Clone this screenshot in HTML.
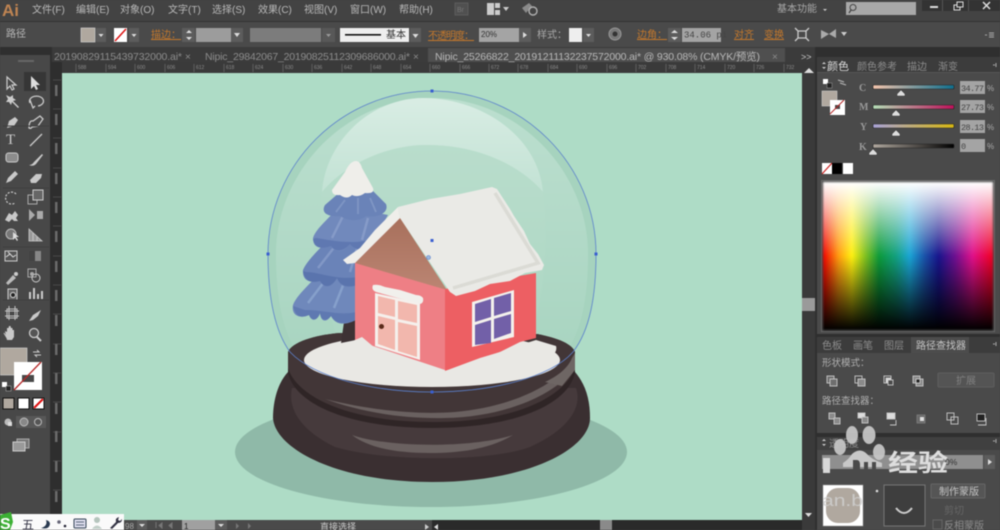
<!DOCTYPE html>
<html><head><meta charset="utf-8"><style>
html,body{margin:0;padding:0;background:#444;width:1000px;height:530px;overflow:hidden}
svg{display:block;filter:blur(.45px)}
text{font-family:"Liberation Sans","Noto Sans CJK SC",sans-serif;fill:#b8b8b8;font-size:10px}
.o{fill:#c4782c;text-decoration:underline}
.d{fill:#8c8c8c}
.s{font-size:5px;fill:#8a8a8a}
.t{fill:none;stroke:#c9c9c9;stroke-width:1.3}
.f{fill:#c9c9c9}
.p{fill:none;stroke:#c4c4c4;stroke-width:1}
</style></head><body>
<div style="position:relative;width:1000px;height:530px;overflow:hidden">
<svg width="1000" height="530" viewBox="0 0 1000 530" xmlns="http://www.w3.org/2000/svg" style="position:absolute;left:0;top:0;z-index:1">
<defs>
<linearGradient id="gable" x1="0" y1="0" x2="0" y2="1"><stop offset="0" stop-color="#a8705c"/><stop offset="1" stop-color="#bb8573"/></linearGradient>
<linearGradient id="glass" x1="0" y1="0" x2="0" y2="1"><stop offset="0" stop-color="#bcdfcf"/><stop offset="1" stop-color="#a9d5c1"/></linearGradient>
<linearGradient id="top" x1="0" y1="0" x2="0" y2="1"><stop offset="0" stop-color="#d9ede4"/><stop offset="1" stop-color="#c2e2d4"/></linearGradient>
<linearGradient id="inner" x1="0" y1="0" x2="0" y2="1"><stop offset="0" stop-color="#b9ddcc"/><stop offset="1" stop-color="#acd7c3"/></linearGradient>
<linearGradient id="sc"><stop offset="0" stop-color="#f5c5ad"/><stop offset="1" stop-color="#0e6f8e"/></linearGradient>
<linearGradient id="sm"><stop offset="0" stop-color="#b5e0b8"/><stop offset="1" stop-color="#c0105a"/></linearGradient>
<linearGradient id="sy"><stop offset="0" stop-color="#a9a3d8"/><stop offset="1" stop-color="#d8b810"/></linearGradient>
<linearGradient id="sk"><stop offset="0" stop-color="#b0a89f"/><stop offset="1" stop-color="#000"/></linearGradient>
</defs>
<!-- chrome backgrounds -->
<rect x="0" y="0" width="1000" height="530" fill="#474747"/>
<rect x="0" y="0" width="1000" height="21" fill="#434343"/>
<rect x="0" y="21" width="1000" height="1" fill="#333"/>
<rect x="0" y="22" width="1000" height="25" fill="#4a4a4a"/>
<rect x="0" y="47" width="815" height="15" fill="#3b3b3b"/>
<rect x="0" y="47" width="52" height="483" fill="#2f2f2f"/>
<rect x="0" y="55" width="50" height="475" fill="#484848"/>
<rect x="428" y="48" width="357" height="14" fill="#4f4f4f"/>
<rect x="52" y="62" width="750" height="11" fill="#3a3a3a"/>
<rect x="51" y="62" width="11" height="468" fill="#2e2e2e"/>
<rect x="62" y="73" width="740" height="447" fill="#aedcc6"/>
<rect x="802" y="62" width="13" height="468" fill="#3a3a3a"/>
<rect x="815" y="47" width="185" height="483" fill="#2f2f2f"/>
<rect x="817" y="57" width="183" height="15" fill="#3c3c3c"/>
<rect x="817" y="72" width="183" height="262" fill="#4a4a4a"/>
<rect x="817" y="337" width="183" height="16" fill="#3c3c3c"/>
<rect x="817" y="353" width="183" height="80" fill="#4a4a4a"/>
<rect x="817" y="437" width="183" height="13" fill="#404040"/>
<rect x="817" y="450" width="183" height="80" fill="#4a4a4a"/>
<rect x="62" y="520" width="740" height="10" fill="#4a4a4a"/>
<rect x="432" y="520" width="370" height="10" fill="#2a2a2a"/>
<rect x="600" y="520" width="12" height="10" fill="#8a8a8a"/>
<rect x="802" y="298" width="13" height="13" fill="#9a9a9a"/>
<rect x="922" y="0" width="78" height="11" fill="#333"/>
<rect x="942" y="0" width="1" height="11" fill="#555"/><rect x="968" y="0" width="1" height="11" fill="#555"/>

<!-- menu -->
<text x="2" y="16" style="font-size:17px;font-weight:bold;fill:#bf8452">Ai</text>
<text x="32" y="13">文件(F)</text><text x="76" y="13">编辑(E)</text><text x="120" y="13">对象(O)</text><text x="168" y="13">文字(T)</text><text x="212" y="13">选择(S)</text><text x="258" y="13">效果(C)</text><text x="304" y="13">视图(V)</text><text x="350" y="13">窗口(W)</text><text x="399" y="13">帮助(H)</text>
<rect x="455" y="3" width="13" height="12" fill="#505050" stroke="#5c5c5c"/>
<text x="457" y="12" style="font-size:7px;fill:#777">Br</text>
<rect x="487" y="3" width="7" height="12" fill="#ccc"/><rect x="495" y="3" width="5" height="5" fill="#ccc"/><rect x="495" y="10" width="5" height="5" fill="#ccc"/>
<path d="M503 7h6l-3 4z" fill="#ccc"/>
<path d="M522 8l7-5 3 3-6 7z" fill="#8a8a8a"/><circle cx="533" cy="11" r="4" fill="none" stroke="#b0b0b0" stroke-width="1.4"/>
<text x="777" y="12" style="fill:#a8a8a8">基本功能</text>
<path d="M823 9h4l-2 2z" fill="#ccc"/>
<rect x="846" y="2" width="70" height="13" fill="#a8a8a8"/>
<circle cx="853" cy="7.5" r="3" fill="none" stroke="#444"/><path d="M851 10l-2 3" stroke="#444" stroke-width="1.3"/>
<rect x="930" y="6" width="8" height="2" fill="#ddd"/>
<rect x="954" y="5" width="6" height="5" fill="none" stroke="#ddd"/><rect x="957" y="2" width="6" height="5" fill="#333" stroke="#ddd"/>
<path d="M983 2l7 7M990 2l-7 7" stroke="#ddd" stroke-width="1.5"/>

<!-- control bar -->
<text x="6" y="37">路径</text>
<rect x="81" y="28" width="14" height="14" fill="#b0a89f" stroke="#ddd" stroke-width=".6"/>
<rect x="96" y="28" width="10" height="14" fill="#5c5c5c"/><path d="M98.500 34h5l-2.500 3z" fill="#ddd"/>
<rect x="114" y="28" width="13" height="14" fill="#fff"/><path d="M115 41L126 29" stroke="#d11" stroke-width="1.500"/>
<rect x="129" y="28" width="10" height="14" fill="#5c5c5c"/><path d="M131.500 34h5l-2.500 3z" fill="#ddd"/>
<text x="151" y="38" class="o">描边：</text>
<rect x="182" y="28" width="13" height="14" fill="#5c5c5c"/><path d="M186 33l3-3 3 3zM186 37l3 3 3-3z" fill="#ddd"/>
<rect x="196" y="28" width="35" height="14" fill="#9c9c9c"/>
<rect x="231" y="28" width="12" height="14" fill="#5c5c5c"/><path d="M234 33h6l-3 4z" fill="#ddd"/>
<rect x="250" y="28" width="71" height="14" fill="#7c7c7c"/>
<rect x="322" y="28" width="13" height="14" fill="#585858"/><path d="M326 34h5l-2.500 3z" fill="#999"/>
<rect x="340" y="28" width="69" height="14" fill="#eee"/>
<rect x="345" y="34" width="36" height="1.600" fill="#111"/>
<text x="386" y="38" style="fill:#333">基本</text>
<rect x="410" y="28" width="11" height="14" fill="#5c5c5c"/><path d="M412.500 34h6l-3 4z" fill="#ddd"/>
<text x="428" y="39" class="o" textLength="46">不透明度：</text>
<rect x="479" y="28" width="40" height="14" fill="#a4a4a4"/>
<text x="481" y="37" style="font-size:8px;fill:#333">20%</text>
<rect x="519" y="28" width="12" height="14" fill="#5c5c5c"/><path d="M523 32l4 3-4 3z" fill="#ddd"/>
<text x="537" y="38" style="fill:#a8a8a8">样式：</text>
<rect x="569" y="28" width="13" height="14" fill="#eee"/>
<rect x="583" y="28" width="11" height="14" fill="#5c5c5c"/><path d="M586 34h5l-2.500 3z" fill="#ddd"/>
<circle cx="615" cy="34" r="6" fill="#777" stroke="#999"/><circle cx="615" cy="34" r="2.500" fill="#333"/>
<text x="637" y="38" class="o">边角：</text>
<rect x="668" y="28" width="13" height="14" fill="#5c5c5c"/><path d="M671 33l3.500-3 3.500 3zM671 37l3.500 3 3.500-3z" fill="#ddd"/>
<rect x="682" y="28" width="39" height="14" fill="#a4a4a4"/>
<text x="684" y="37.500" style="font-family:'Liberation Mono';font-size:9px;fill:#444">34.06 pi</text>
<text x="734" y="38" class="o">对齐</text><text x="764" y="38" class="o">变换</text>
<path d="M798 31h8v7h-8zM795 28l3 3M809 28l-3 3M795 41l3-3M809 41l-3-3" fill="none" stroke="#ccc" stroke-width="1.300"/>
<path d="M821 30l8 4-8 5zM836 29l-7 5 7 4z" fill="#aaa"/><path d="M841 32h6l-3 4z" fill="#ccc"/>
<path d="M985 35h2M989 33h5M989 35h5M989 37h5" stroke="#aaa"/>

<!-- tabs -->
<text x="54" y="60" class="d" style="font-size:10.500px" textLength="128">20190829115439732000.ai*</text>
<text x="185" y="60" class="d" style="font-size:10px">×</text>
<text x="205" y="60" class="d" style="font-size:10.500px" textLength="205">Nipic_29842067_20190825112309686000.ai*</text>
<text x="413" y="60" class="d" style="font-size:10px">×</text>
<text x="435" y="60" style="font-size:10.500px;fill:#b8b8b8" textLength="325">Nipic_25266822_20191211132237572000.ai* @ 930.08% (CMYK/预览)</text>
<text x="772" y="60" class="d">×</text>
<text x="801" y="60" style="fill:#ccc;font-size:9px">&gt;&gt;</text>
<path d="M804 73l5-5 5 5z" fill="#ddd"/>
<path d="M805 513h7l-3.500 4z" fill="#ddd"/>

<!-- h ruler -->
<g>
<text class="s" x="78" y="69">588</text><text class="s" x="108" y="69">594</text><text class="s" x="137" y="69">600</text><text class="s" x="167" y="69">606</text><text class="s" x="196" y="69">612</text><text class="s" x="226" y="69">618</text><text class="s" x="255" y="69">624</text><text class="s" x="285" y="69">630</text><text class="s" x="314" y="69">636</text><text class="s" x="344" y="69">642</text><text class="s" x="373" y="69">648</text><text class="s" x="403" y="69">654</text><text class="s" x="432" y="69">660</text><text class="s" x="462" y="69">666</text><text class="s" x="491" y="69">672</text><text class="s" x="520" y="69">678</text><text class="s" x="550" y="69">684</text><text class="s" x="579" y="69">690</text><text class="s" x="609" y="69">696</text><text class="s" x="638" y="69">702</text><text class="s" x="668" y="69">708</text><text class="s" x="697" y="69">714</text><text class="s" x="727" y="69">720</text><text class="s" x="756" y="69">726</text><text class="s" x="786" y="69">732</text>
</g>
<path stroke="#777" stroke-width=".6" d="M76 64v8M106 64v8M135 64v8M165 64v8M194 64v8M224 64v8M253 64v8M283 64v8M312 64v8M342 64v8M371 64v8M401 64v8M430 64v8M460 64v8M489 64v8M518 64v8M548 64v8M577 64v8M607 64v8M636 64v8M666 64v8M695 64v8M725 64v8M754 64v8M784 64v8"/>
<path stroke="#666" stroke-width=".6" d="M53 80h8M53 109h8M53 138h8M53 168h8M53 197h8M53 226h8M53 256h8M53 285h8M53 314h8M53 344h8M53 373h8M53 402h8M53 432h8M53 461h8M53 490h8M53 519h8"/>
<g fill="#6a6a6a"><rect x="55" y="85" width="2.500" height="11"/><rect x="55" y="114" width="2.500" height="11"/><rect x="55" y="143" width="2.500" height="11"/><rect x="55" y="173" width="2.500" height="11"/><rect x="55" y="202" width="2.500" height="11"/><rect x="55" y="231" width="2.500" height="11"/><rect x="55" y="261" width="2.500" height="11"/><rect x="55" y="290" width="2.500" height="11"/><rect x="55" y="315" width="2.500" height="11"/><rect x="55" y="344" width="2.500" height="11"/><rect x="55" y="373" width="2.500" height="11"/><rect x="55" y="403" width="2.500" height="11"/><rect x="55" y="431" width="2.500" height="11"/><rect x="55" y="461" width="2.500" height="11"/><rect x="55" y="491" width="2.500" height="11"/></g>

<!-- tools -->
<rect x="24" y="72" width="22" height="19" fill="#363636"/>
<rect x="18" y="60" width="16" height="2" fill="#666"/>
<path d="M7 77l0 12 3-3 2 4 2-1-2-4 4 0z" fill="none" stroke="#ccc" stroke-width="1.200"/>
<path d="M31 76l0 13 3-3 2 4 2-1-2-4 4 0z" fill="#ddd"/>
<path d="M6 95l4 2 3-2 0 3 3 2-3 1 6 6-1 1-6-6-1 3-2-3-3 0 2-3z" fill="#ccc"/>
<path d="M30 103a7 5 0 1 1 8 3M30 100l3 8 2-2" class="t"/>
<path d="M7 128l2-7 6-4 3 3-4 6z" class="f"/>
<path d="M29 128q0-8 4-7l7-5 3 3-5 7-6 1q-1 2-3 1z" class="t"/>
<text x="6" y="144" style="font-family:'Liberation Serif';font-size:15px;fill:#ccc">T</text>
<path d="M30 146l12-12" class="t"/>
<rect x="6" y="153" width="12" height="9" rx="2.500" fill="#8c8c8c" stroke="#ccc"/>
<path d="M29 165q3 0 5-3l8-8 1 1-7 9q-3 3-7 1z" class="f"/>
<path d="M6 183l2-5 7-7 3 3-7 7z" class="f"/>
<path d="M30 180l6-6h6l-1 4-5 5h-5z" class="f"/>
<path d="M16 194a6 6 0 1 0-1 9" fill="none" stroke="#ccc" stroke-width="1.200" stroke-dasharray="2 1.500"/>
<rect x="28" y="195" width="9" height="9" fill="none" stroke="#aaa"/><rect x="33" y="190" width="10" height="10" fill="#666" stroke="#ccc"/>
<path d="M5 220l4-7 3 2 3-4 3 4-2 3 2 3h-4l-2-2-3 3z" class="f"/>
<path d="M29 209l6 6-6 6zM37 211h6v8h-6z" fill="#aaa"/>
<circle cx="11" cy="234" r="5" fill="#777" stroke="#bbb"/><path d="M13 232l0 8 2-2 2 3 1-1-2-3 3 0z" fill="#ddd"/>
<path d="M29 229v12h13l-13-12zM33 233v8M37 237v4" fill="#999" stroke="#ccc" stroke-width=".8"/>
<rect x="5" y="251" width="12" height="10" fill="#555" stroke="#ccc"/><path d="M6 257l4-3 3 3 3-2M8 252l3 3" stroke="#ddd" fill="none"/>
<rect x="29" y="251" width="12" height="10" fill="#888"/><rect x="29" y="251" width="6" height="10" fill="#444"/>
<path d="M6 283l7-8 3 3-8 7z" fill="#bbb"/><circle cx="16" cy="274" r="2" fill="#ccc"/>
<rect x="28" y="269" width="8" height="8" fill="none" stroke="#aaa"/><circle cx="36" cy="278" r="4" fill="none" stroke="#ccc"/><circle cx="32" cy="274" r="2" fill="#aaa"/>
<rect x="8" y="289" width="9" height="11" fill="#666" stroke="#ccc"/><circle cx="13" cy="295" r="2.500" fill="#222" stroke="#ddd"/>
<path d="M30 299v-7M34 299v-11M38 299v-5M42 299v-8" stroke="#ccc" stroke-width="2"/>
<path d="M7 309h10v9H7zM5 311h14M5 316h14M9 306v14M15 306v14" class="p"/>
<path d="M29 321l4-6 8-5-3 6-5 4z" class="f"/>
<path d="M6 336l-1-5 2 1v-4h1.500l.5-2h1.500l.5 2h1.500v2h1.500v7l-2 3h-5z" class="f"/><path d="M4 333l3 5" stroke="#ccc"/>
<circle cx="34" cy="333" r="4.500" fill="#555" stroke="#ccc" stroke-width="1.300"/><path d="M37 337l4 4" stroke="#ccc" stroke-width="2"/>
<path d="M3 300h46M3 188h46M3 126h46M3 247h46" stroke="#3e3e3e"/>
<!-- fill / stroke -->
<rect x="0" y="348" width="27" height="27" fill="#b0a89f" stroke="#ddd" stroke-width=".6"/>
<rect x="14" y="362" width="28" height="28" fill="#fff"/><rect x="22" y="375" width="12" height="7" fill="#484848"/>
<path d="M14 390l27-28" stroke="#b52828" stroke-width="1.300"/>
<path d="M33 352l6 0-2-2M41 355l-6 0 2 2" fill="none" stroke="#ccc"/>
<rect x="2" y="382" width="5" height="5" fill="#fff"/><rect x="6" y="386" width="5" height="5" fill="#222" stroke="#bbb" stroke-width=".5"/>
<rect x="3" y="398" width="11" height="11" fill="#b0a89f" stroke="#111"/>
<rect x="18" y="398" width="11" height="11" fill="#fff" stroke="#111"/>
<rect x="33" y="398" width="11" height="11" fill="#fff" stroke="#111"/><path d="M34 408l9-9" stroke="#d11" stroke-width="2"/>
<rect x="16" y="416" width="30" height="12" fill="#585858"/>
<circle cx="8" cy="422" r="3.500" fill="#bbb"/><rect x="8" y="422" width="4" height="4" fill="#ddd"/>
<circle cx="24" cy="422" r="4" fill="#888" stroke="#bbb"/><circle cx="38" cy="422" r="3.500" fill="#555" stroke="#bbb"/>
<rect x="17" y="439" width="12" height="9" fill="#777" stroke="#aaa"/><rect x="13" y="442" width="12" height="9" fill="#999" stroke="#ccc"/>

<!-- artwork -->
<ellipse cx="431" cy="452" rx="196" ry="55" fill="#8fb9a8"/>
<path d="M268 254C268 165 341 91 432 91C523 91 596 165 596 254C596 296 590 330 573 352L290 352C274 330 268 296 268 254Z" fill="#a6d3be"/>
<path d="M276 254C276 172 345 98 432 98C519 98 588 172 588 254C588 296 582 330 566 352L297 352C282 330 276 296 276 254Z" fill="url(#glass)"/>
<path d="M322 192C326 140 372 98 423 98C480 98 538 135 543 192C515 160 470 145 427 145C385 145 345 165 322 192Z" fill="url(#top)"/>
<path d="M322 192C345 165 385 145 427 145C470 145 515 160 543 192C548 250 545 300 525 350L340 350C325 300 318 240 322 192Z" fill="url(#inner)"/>
<!-- base -->
<path d="M288 372C276 385 273 405 273 418C275 448 335 482 432 482C530 482 590 448 590 418C590 400 586 385 575 372Z" fill="#3a2f31"/>
<path d="M292 388C288 405 296 428 335 447C385 462 490 462 530 447C572 428 582 405 576 388Z" fill="#463a3c"/>
<path d="M288 352C292 342 315 335 340 333L537 334C558 338 572 344 575 352L575 372C570 402 520 428 432 428C345 428 293 402 288 372Z" fill="#2f2526"/>
<path d="M288 352C292 342 315 335 340 333L537 334C558 338 572 344 575 352L575 368C565 395 520 422 432 422C345 422 296 395 288 368Z" fill="#423637"/>
<path d="M325 399C370 410 415 415 455 412C500 408 548 392 572 362L575 368C555 395 505 417 445 418C400 419 358 411 325 399Z" fill="#6a6160"/>
<path d="M545 382C558 376 568 368 572 358L575 353V370L562 386Z" fill="#6e6664"/>
<path d="M352 435C385 447 470 449 513 435C490 449 460 453 430 453C400 453 370 449 352 435Z" fill="#6a6160"/>
<ellipse cx="432" cy="360" rx="128" ry="27" fill="#e9e8e4"/>
<!-- tree -->
<path d="M341 343L345 315H356V340Z" fill="#3d3234"/>
<path d="M332 258C318 278 298 292 293 305C291 316 300 319 309 315C312 323 318 320 320 313C321 323 327 322 331 316C336 326 346 325 356 320L375 245Z" fill="#6f88bb"/>
<path d="M293 306C296 318 302 318 309 315C312 322 318 320 320 313C321 322 327 321 331 316C336 325 346 324 356 320L356 312C340 316 325 310 305 310Z" fill="#5f79b1"/>
<path d="M324 282L308 303M346 278L334 308" stroke="#86a0cb" stroke-width="2.500" fill="none"/>
<path d="M336 230C325 245 308 258 303 270C302 282 312 283 320 281C325 290 332 287 337 278C341 289 350 288 358 285L385 235Z" fill="#6a83b8"/>
<path d="M303 271C305 282 312 283 320 281C325 289 332 287 337 278C341 288 350 287 358 285L362 276C340 282 320 272 306 272Z" fill="#5a74ad"/>
<path d="M340 240L318 268M360 238L350 272" stroke="#8298c6" stroke-width="2.500" fill="none"/>
<path d="M340 205C330 218 316 228 313 238C313 249 322 249 331 246C336 254 344 252 350 244C355 252 364 250 370 246L388 215Z" fill="#7189bc"/>
<path d="M313 239C315 249 322 249 331 246C336 253 344 251 350 244C355 251 364 250 370 246L376 238C355 246 330 240 316 238Z" fill="#5f78b1"/>
<path d="M345 212L332 238M368 218L362 240" stroke="#869bc8" stroke-width="2.500" fill="none"/>
<path d="M340 192L325 205C321 212 326 217 340 216C350 222 360 221 366 216C380 218 389 212 386 204L370 188Z" fill="#6a83b8"/>
<path d="M345 200L336 212M358 198V214M370 198L376 212" stroke="#7f96c4" stroke-width="1.800" fill="none"/>
<path d="M356 161Q350 161 345 172L332 190Q332 196 340 195Q347 200 352 195Q358 198 365 193Q375 194 373 188L362 168Q360 161 356 161Z" fill="#efeeea"/>
<!-- house -->
<path d="M355 263L400 218L445 289L445 370L355 340Z" fill="#ee7f85"/>
<path d="M355 263L400 218L447 290Z" fill="url(#gable)"/>
<path d="M445 289L536 273V338L520 342L500 352L480 358L445 371Z" fill="#ed5f63"/>
<path d="M355 340L362 337L375 348L420 362L445 371L470 364L500 352L520 345L536 340L556 346C565 375 400 395 306 365C300 350 330 345 340 346Z" fill="#e9e8e4"/>
<!-- door -->
<path d="M375 293L420 303V360L375 346Z" fill="#f5f0ec"/>
<path d="M378 296L395 300V317L378 313ZM398 301L417 305V323L398 319ZM378 316L395 320V350L378 344ZM398 322L417 326V357L398 351Z" fill="#f2b7ad"/>
<circle cx="381.500" cy="326.500" r="2.500" fill="#5a2a1a"/>
<path d="M373 285Q371 290 376 292L420 304Q424 303 423 298Q421 295 416 295L400 290L385 287Q378 284 373 285Z" fill="#f1f0ec"/>
<!-- window -->
<path d="M472 302L514 290V337L472 347Z" fill="#f4f1ec"/>
<path d="M475 304L491 299V317L475 322ZM494 298L511 293V311L494 316ZM475 325L491 320V343L475 345ZM494 319L511 314V333L494 339Z" fill="#7260a8"/>
<!-- roof -->
<path d="M398 207L430 199L460 194L492 187L497 189L510 209L514 216L524 231L530 244L538 254L544 265L542 270L525 273L510 281L490 284L475 291L456 296L450 292L400 218Z" fill="#eaeae6"/>
<path d="M495 193L538 263L453 288" fill="none" stroke="#dbdbd5" stroke-width="3.500"/>
<path d="M398 207L400 218L355 263L347 264L343 260L360 248L375 230Z" fill="#efeeea"/>
<!-- outline -->
<path d="M432 91C523 91 596 165 596 254C596 296 590 330 573 352C550 378 490 392 432 392C374 392 315 378 290 352C274 330 268 296 268 254C268 165 341 91 432 91Z" fill="none" stroke="#5b80cc" stroke-width=".8"/>
<g fill="#3a5fd0"><rect x="430.500" y="89.500" width="3" height="3"/><rect x="266.500" y="252.500" width="3" height="3"/><rect x="594.500" y="252.500" width="3" height="3"/><rect x="430.500" y="390.500" width="3" height="3"/><rect x="430.500" y="239" width="3" height="3"/></g>
<circle cx="428.500" cy="257.500" r="2" fill="#9bb7dd" stroke="#5b80cc" stroke-width=".6"/>

<!-- status bar -->
<text x="125" y="529" style="font-size:8px;fill:#aaa">98</text>
<rect x="137" y="520" width="10" height="10" fill="#5c5c5c"/><path d="M139 524h6l-3 3z" fill="#ddd"/>
<path d="M156 522v6M162 523l-3 2.500 3 2.500zM172 523l-3 2.500 3 2.500z" stroke="#777" fill="#777"/>
<rect x="182" y="520" width="33" height="10" fill="#a0a0a0"/><text x="184" y="529" style="font-size:8px;fill:#222">1</text>
<rect x="215" y="520" width="12" height="10" fill="#5c5c5c"/><path d="M218 524h6l-3 3z" fill="#ddd"/>
<path d="M236 523l3 3-3 3zM248 523l3 3-3 3" fill="#777"/>
<text x="320" y="530" style="font-size:9px;fill:#ccc">直接选择</text>
<path d="M425 524l4 3-4 3z" fill="#ccc"/>
<path d="M438 524l-4 3 4 3z" fill="#ddd"/>

<!-- color panel -->
<path d="M822 64l2-2 2 2zM822 67l2 2 2-2z" fill="#ccc"/>
<text x="827" y="70" style="font-size:11px;fill:#ddd">颜色</text>
<text x="857" y="70" class="d">颜色参考</text><text x="907" y="70" class="d">描边</text><text x="938" y="70" class="d">渐变</text>
<path d="M993 65h2M996 63v4" stroke="#aaa"/>
<rect x="817" y="72" width="183" height="1" fill="#555"/>
<rect x="822" y="91" width="15" height="15" fill="#b0a89f" stroke="#ddd" stroke-width=".5"/>
<rect x="830" y="100" width="15" height="15" fill="#fff"/><rect x="835" y="105" width="5" height="4" fill="#484848"/><path d="M830 114l14-14" stroke="#b52828"/>
<rect x="823" y="79" width="5" height="5" fill="#fff"/><rect x="827" y="83" width="5" height="5" fill="#222" stroke="#bbb" stroke-width=".4"/>
<path d="M838 80l6 2M846 85l-6-2" stroke="#bbb" stroke-width="1"/>
<text x="859" y="91" style="font-family:'Liberation Serif';font-weight:bold;fill:#999">C</text>
<text x="859" y="110" style="font-family:'Liberation Serif';font-weight:bold;fill:#999">M</text>
<text x="860" y="130" style="font-family:'Liberation Serif';font-weight:bold;fill:#999">Y</text>
<text x="859" y="150" style="font-family:'Liberation Serif';font-weight:bold;fill:#999">K</text>
<rect x="873" y="85" width="81" height="4" rx="1" fill="url(#sc)" stroke="#222" stroke-width=".6"/>
<rect x="873" y="105" width="81" height="4" rx="1" fill="url(#sm)" stroke="#222" stroke-width=".6"/>
<rect x="873" y="124" width="81" height="4" rx="1" fill="url(#sy)" stroke="#222" stroke-width=".6"/>
<rect x="873" y="144" width="81" height="4" rx="1" fill="url(#sk)" stroke="#222" stroke-width=".6"/>
<g fill="#ddd" stroke="#222" stroke-width=".4"><path d="M901 90l4 4v2h-8v-2z"/><path d="M896 110l4 4v2h-8v-2z"/><path d="M896 130l4 4v2h-8v-2z"/><path d="M873 149l4 4v2h-8v-2z"/></g>
<rect x="960" y="81" width="25" height="13" fill="#a4a4a4"/><rect x="960" y="100" width="25" height="13" fill="#a4a4a4"/><rect x="960" y="120" width="25" height="13" fill="#a4a4a4"/><rect x="960" y="139" width="25" height="13" fill="#a4a4a4"/>
<text x="961" y="91" style="font-family:'Liberation Mono';font-size:8.500px;fill:#444" textLength="23">34.77</text>
<text x="961" y="110" style="font-family:'Liberation Mono';font-size:8.500px;fill:#444" textLength="23">27.73</text>
<text x="961" y="130" style="font-family:'Liberation Mono';font-size:8.500px;fill:#444" textLength="23">28.13</text>
<text x="961" y="149" style="font-family:'Liberation Mono';font-size:8.500px;fill:#444">0</text>
<text x="987" y="91" style="font-size:8px;fill:#aaa">%</text><text x="987" y="110" style="font-size:8px;fill:#aaa">%</text><text x="987" y="130" style="font-size:8px;fill:#aaa">%</text><text x="987" y="149" style="font-size:8px;fill:#aaa">%</text>
<rect x="822" y="163" width="10" height="11" fill="#fff"/><path d="M822 174l10-11" stroke="#c22" stroke-width="1.200"/>
<rect x="832" y="163" width="10" height="11" fill="#000"/>
<rect x="843" y="163" width="10" height="11" fill="#fff"/>
<rect x="821.500" y="180.500" width="173" height="151" fill="none" stroke="#666"/>

<!-- pathfinder panel -->
<rect x="911" y="337" width="58" height="16" fill="#4c4c4c"/>
<text x="822" y="349" class="d">色板</text><text x="853" y="349" class="d">画笔</text><text x="884" y="349" class="d">图层</text><text x="916" y="349" style="fill:#c4c4c4">路径查找器</text>
<path d="M993 344h2M996 342v4" stroke="#aaa"/>
<text x="822" y="366" style="fill:#b0b0b0;font-size:9.500px">形状模式：</text>
<g fill="#6e6e6e" stroke="#c8c8c8" stroke-width=".9">
<rect x="827" y="376" width="7" height="7"/><rect x="830" y="379" width="7" height="7"/>
<rect x="855" y="376" width="7" height="7" fill="#4a4a4a"/><rect x="858" y="379" width="7" height="7" fill="#8a8a8a"/>
<rect x="884" y="376" width="7" height="7" fill="#4a4a4a"/><rect x="886" y="378" width="5" height="5" fill="#ddd"/><rect x="888" y="380" width="5" height="5" fill="#4a4a4a"/>
<rect x="913" y="376" width="7" height="7" fill="#8a8a8a"/><rect x="916" y="379" width="7" height="7" fill="#8a8a8a"/><rect x="916" y="379" width="4" height="4" fill="#222"/>
</g>
<rect x="938" y="373" width="56" height="14" rx="1" fill="#545454" stroke="#5e5e5e"/>
<text x="956" y="384" style="fill:#808080">扩展</text>
<text x="822" y="404" style="fill:#b0b0b0;font-size:9.500px">路径查找器：</text>
<g fill="#8a8a8a" stroke="#c8c8c8" stroke-width=".9">
<rect x="829" y="413" width="6" height="6"/><rect x="834" y="418" width="6" height="6"/>
<rect x="858" y="413" width="7" height="5" fill="#ddd"/><rect x="862" y="417" width="6" height="6"/>
<rect x="887" y="413" width="8" height="6" fill="#ddd"/><path d="M896 420v5h-6" fill="none"/>
<rect x="917" y="415" width="8" height="8" fill="#6a6a6a" stroke="#7a7a7a"/><rect x="920" y="417" width="4" height="4" fill="#ddd" stroke="none"/>
<rect x="947" y="413" width="7" height="7" fill="none"/><rect x="951" y="417" width="7" height="7" fill="none"/>
<rect x="977" y="414" width="8" height="7" fill="#222"/><path d="M986 418v7h-8" fill="none"/>
</g>
<rect x="817" y="433" width="183" height="4" fill="#2f2f2f"/>

<!-- transparency panel -->
<path d="M822 441l2-2 2 2zM822 444l2 2 2-2z" fill="#ccc"/>
<text x="829" y="447" class="d">透明度</text>
<path d="M993 441h2M996 439v4" stroke="#aaa"/>
<rect x="822" y="455" width="161" height="14" fill="#8f8f8f"/>
<rect x="984" y="455" width="11" height="14" fill="#5c5c5c"/><path d="M988 459l4 3-4 3z" fill="#ddd"/>
<text x="945" y="465" style="font-size:8.500px;fill:#333">0%</text>
<rect x="823" y="485" width="40" height="41" fill="#fff" stroke="#999" stroke-width=".5"/>
<rect x="826" y="488" width="34" height="35" rx="12" fill="#b0a89f"/>
<circle cx="877" cy="491" r="1.300" fill="#ddd"/>
<rect x="884" y="485" width="41" height="41" fill="#3e3e3e" stroke="#777"/>
<path d="M896 508q8 10 16 0" fill="none" stroke="#ccc" stroke-width="2"/>
<rect x="931" y="484" width="54" height="14" rx="1" fill="#555" stroke="#666"/>
<text x="939" y="495" style="fill:#c4c4c4">制作蒙版</text>
<rect x="933" y="520" width="9" height="9" fill="none" stroke="#666"/>
<text x="944" y="529" class="d">反相蒙版</text>
<text x="944" y="514" class="d" style="fill:#666">剪切</text>

<!-- watermark -->
<g fill="#c8c8c8" opacity=".92">
<ellipse cx="852" cy="435" rx="6" ry="9"/><ellipse cx="869" cy="435" rx="6.500" ry="9"/>
<ellipse cx="840" cy="447" rx="6" ry="8"/><ellipse cx="879" cy="452" rx="6" ry="8"/>
</g>
<path d="M843 463q6-4 9-9q8-7 15 0q4 5 15 9v4H843z" fill="#c8c8c8"/>
<path d="M853 470v-10h4q3 0 3 5v5zM864 462v8h4v-8zM872 462v8h4v-8z" fill="#4a4a4a"/>
<rect x="823" y="458" width="7" height="15" fill="#d8d8d8"/>
<text x="888" y="471" style="font-size:24px;font-weight:bold;fill:#dedede" textLength="60" lengthAdjust="spacingAndGlyphs">经验</text>
<text x="822" y="506" style="font-size:17px;fill:#d0d0d0;opacity:.85" textLength="41" lengthAdjust="spacingAndGlyphs">an.b</text>

<!-- IME bar -->
<rect x="0" y="514" width="124" height="16" fill="#fafafa"/>
<path d="M0 515l11-3 2 10-3 8H0z" fill="#3cb034"/>
<text x="0" y="529" style="font-size:16px;font-weight:bold;fill:#fff">S</text>
<text x="22" y="529" style="font-size:12px;fill:#334">五</text>
<path d="M46 520q2 6-5 8q8 2 9-4q0-3-4-4z" fill="#2a3a50"/>
<circle cx="59" cy="522" r="1.800" fill="#667"/><circle cx="65" cy="526" r="1.300" fill="#223"/>
<rect x="74" y="519" width="12" height="9" rx="1" fill="#dde" stroke="#345"/>
<path d="M76 522h8M76 525h8" stroke="#345" stroke-width=".8"/>
<circle cx="97" cy="520" r="3" fill="#b5c5bd"/><path d="M92 529q5-7 10 0z" fill="#c2d0c9"/>
<path d="M110 528l6-6q-1-4 3-5l-1 3 2 1 2-2q0 4-4 4l-6 6z" fill="#334"/>
</svg>
<div style="position:absolute;left:823px;top:182px;width:170px;height:148px;filter:blur(1px);background:linear-gradient(to bottom,#fff 0%,rgba(255,255,255,0) 50%,rgba(0,0,0,0) 50%,#000 100%),linear-gradient(to right,#f00000 0%,#ff9a10 9%,#fff010 17%,#7fc020 25%,#0c9a3a 33%,#12a080 43%,#1aa5d5 51%,#1a50a8 60%,#18148c 68%,#701090 78%,#e0108a 88%,#f00020 100%);z-index:2"></div>
</div>
</body></html>
